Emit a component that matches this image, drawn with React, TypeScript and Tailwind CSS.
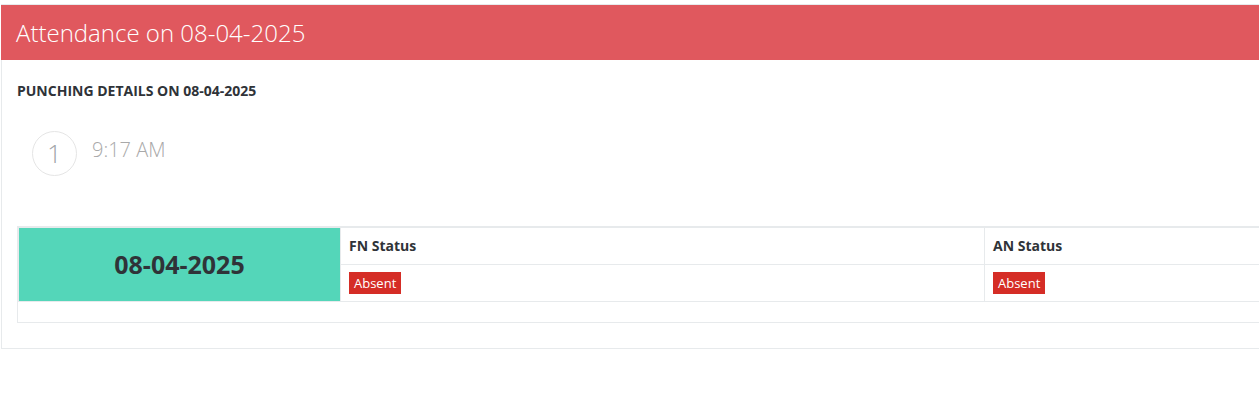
import React from "react";

type Punch = { no: number; time: string };

export default function App() {
  const date = "08-04-2025";
  const punches: Punch[] = [{ no: 1, time: "9:17 AM" }];

  return (
    <div
      className="w-[1259px] h-[412px] overflow-hidden bg-white pt-1"
      style={{ fontFamily: '"Open Sans", "Liberation Sans", sans-serif' }}
    >
      <div className="ml-px w-[1700px]">
        {/* panel header */}
        <div className="border-t border-[#e7eaec] bg-[#e0585e] h-[56px] flex items-center pl-[15px]">
          <h1 className="text-white text-[24px] font-light leading-none">Attendance on {date}</h1>
        </div>

        {/* panel body */}
        <div className="border-l border-b border-[#e7eaec] pl-[15px] pt-[21px] pb-[25px]">
          <h5 className="text-[14px] font-bold leading-[19px] text-[#2f3338] uppercase">
            Punching details on {date}
          </h5>

          <div className="mt-[31px] pl-[15px] flex flex-col gap-3">
            {punches.map((p) => (
              <div key={p.no} className="flex items-start gap-[15px]">
                <div className="w-[45px] h-[45px] rounded-full border border-[#e5e5e5] flex items-center justify-center text-[26px] font-light text-[#a0a4a8]">
                  {p.no}
                </div>
                <div className="pt-[5px] text-[20px] font-light text-[#a9a9a9] leading-[28px]">{p.time}</div>
              </div>
            ))}
          </div>

          {/* status table */}
          <div className="mt-[50px] border border-[#e7eaec] w-[1650px]">
            <div className="grid grid-cols-[321px_644px_645px] border-t border-l border-b border-[#e7eaec]">
              <div className="row-span-2 bg-[#54d6b9] flex items-center justify-center text-[25px] font-bold text-[#2f3338]">
                {date}
              </div>
              <div className="h-[37px] border-l border-b border-[#e7eaec] pl-2 pb-[2px] flex items-center text-[14px] font-bold text-[#2f3338]">
                FN Status
              </div>
              <div className="h-[37px] border-l border-b border-[#e7eaec] pl-2 pb-[2px] flex items-center text-[14px] font-bold text-[#2f3338]">
                AN Status
              </div>
              <div className="h-[36px] border-l border-[#e7eaec] pl-2 flex items-center">
                <span className="bg-[#d52d26] text-white text-[13px] leading-[22px] px-[5px]">Absent</span>
              </div>
              <div className="h-[36px] border-l border-[#e7eaec] pl-2 flex items-center">
                <span className="bg-[#d52d26] text-white text-[13px] leading-[22px] px-[5px]">Absent</span>
              </div>
            </div>
            <div className="h-[20px]" />
          </div>
        </div>
      </div>
    </div>
  );
}
